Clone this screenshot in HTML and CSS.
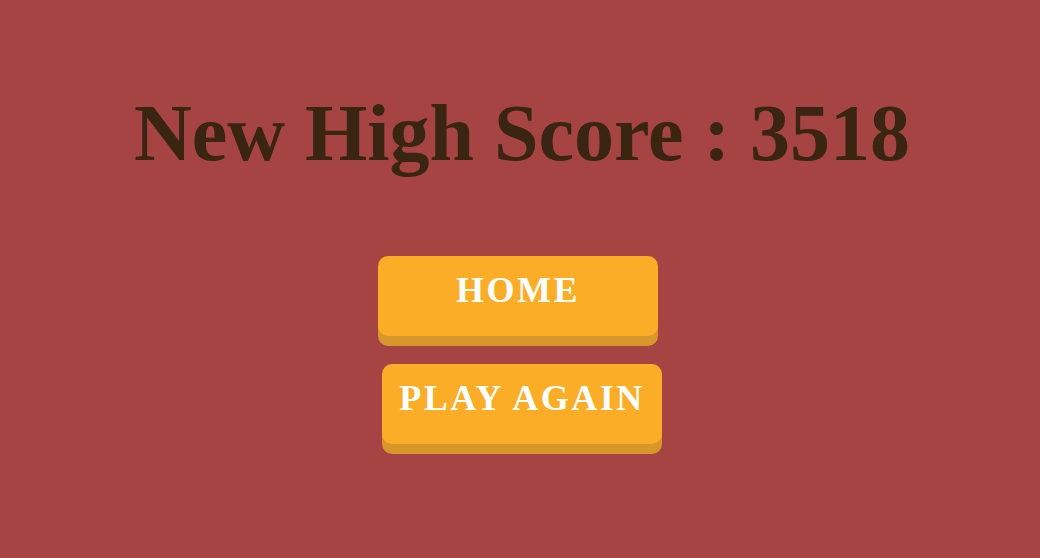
FILE: index.html
```html
<!DOCTYPE html>
<html>
<head>
<meta charset="utf-8">
<link rel="stylesheet" href="styles.css">
</head>
<body>
<main class="screen">
  <h1 class="title">New High Score : 3518</h1>
  <div class="actions">
    <button class="btn btn-home">HOME</button>
    <button class="btn btn-again">PLAY AGAIN</button>
  </div>
</main>
</body>
</html>
```
FILE: styles.css
```css
html, body {
  margin: 0;
  padding: 0;
  height: 100%;
  background: #a64444;
}
.screen {
  display: flex;
  flex-direction: column;
  align-items: center;
  font-family: "Liberation Serif", "Times New Roman", serif;
}
.title {
  margin: 93px 0 0 4px;
  font-size: 80px;
  line-height: 80px;
  font-weight: bold;
  color: #3a2513;
}
.actions {
  margin-top: 83px;
  display: flex;
  flex-direction: column;
  align-items: center;
  gap: 28px;
}
.btn {
  width: 280px;
  height: 80px;
  padding: 16px 0 28px;
  box-sizing: border-box;
  border: none;
  border-radius: 10px;
  background: #fbad28;
  box-shadow: 0 10px 0 #d9962a;
  color: #ffffff;
  font-family: "Liberation Serif", "Times New Roman", serif;
  font-weight: bold;
  font-size: 36px;
  line-height: 36px;
  letter-spacing: 2.5px;
  text-align: center;
}
.btn-home {
  margin-right: 4px;
}
.btn-again {
  margin-left: 4px;
}
```
